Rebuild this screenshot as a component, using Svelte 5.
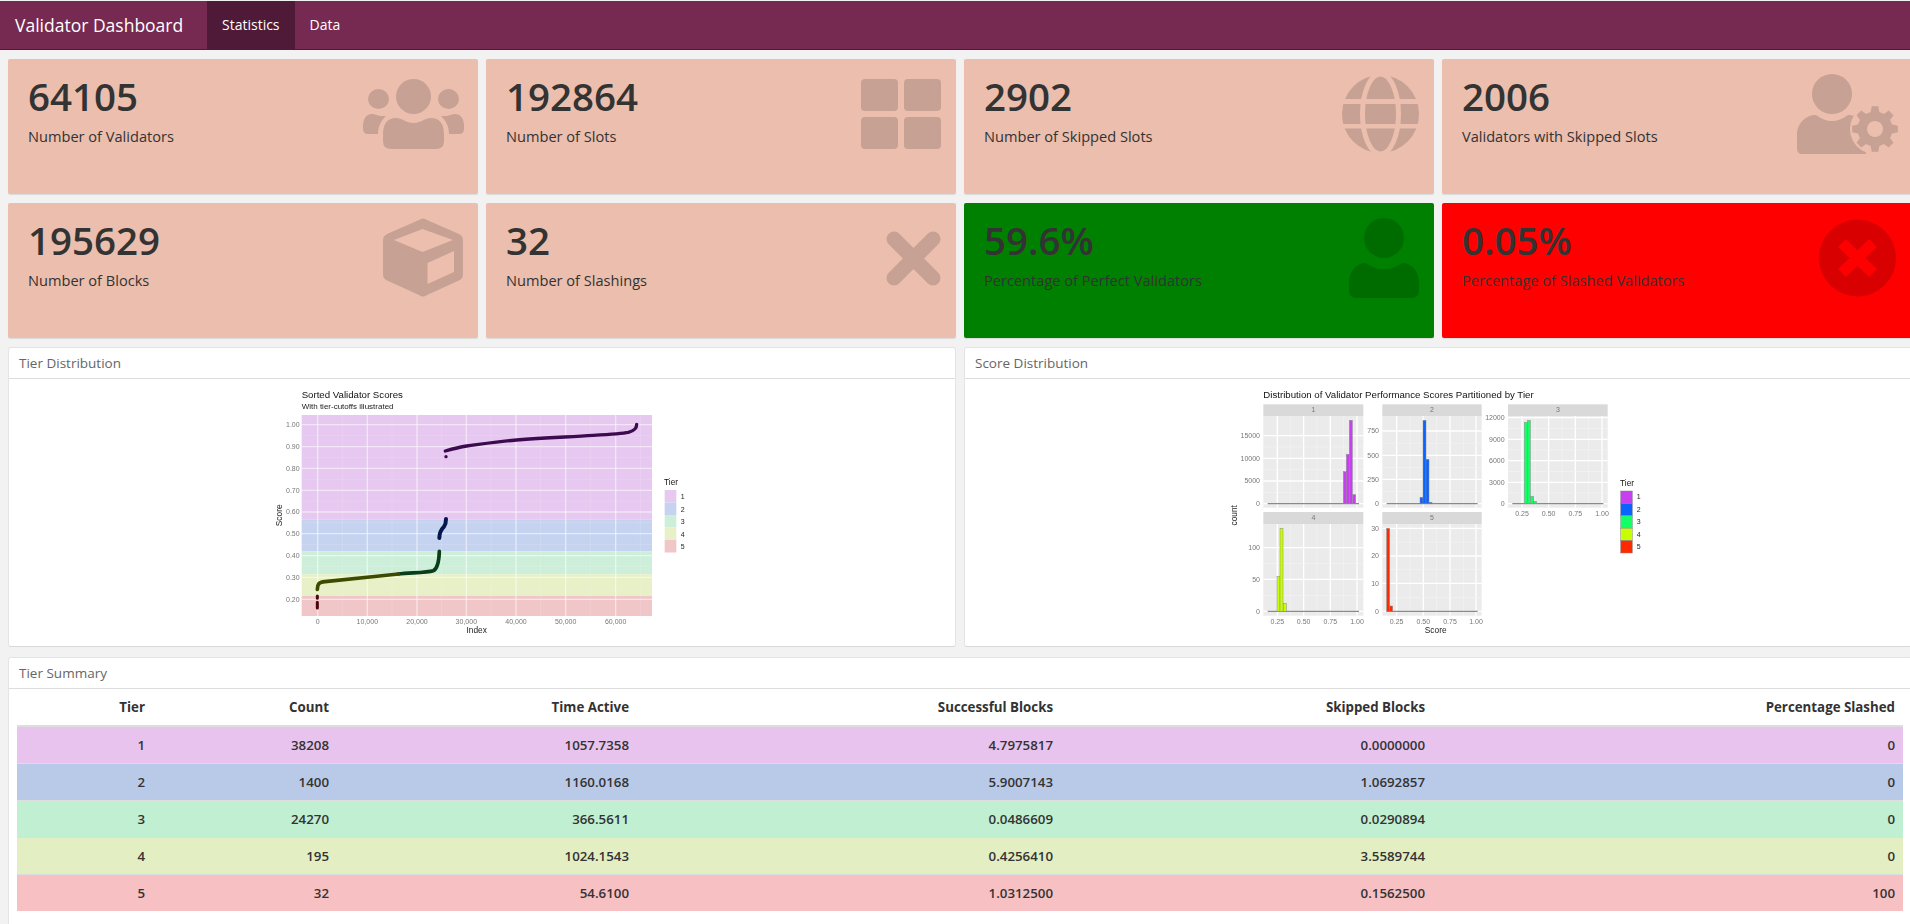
<script>
  const cards = [
    { value: "64105", label: "Number of Validators", icon: "users" },
    { value: "192864", label: "Number of Slots", icon: "th" },
    { value: "2902", label: "Number of Skipped Slots", icon: "globe" },
    { value: "2006", label: "Validators with Skipped Slots", icon: "usercog" },
    { value: "195629", label: "Number of Blocks", icon: "cube" },
    { value: "32", label: "Number of Slashings", icon: "times" },
    { value: "59.6%", label: "Percentage of Perfect Validators", icon: "user", tone: "green" },
    { value: "0.05%", label: "Percentage of Slashed Validators", icon: "timescircle", tone: "red" }
  ];

  const rows = [
    ["1", "38208", "1057.7358", "4.7975817", "0.0000000", "0", "#e8c3ee"],
    ["2", "1400", "1160.0168", "5.9007143", "1.0692857", "0", "#b9cae8"],
    ["3", "24270", "366.5611", "0.0486609", "0.0290894", "0", "#c0efd2"],
    ["4", "195", "1024.1543", "0.4256410", "3.5589744", "0", "#e3eec3"],
    ["5", "32", "54.6100", "1.0312500", "0.1562500", "100", "#f7c0c3"]
  ];
  const columns = ["Tier", "Count", "Time Active", "Successful Blocks", "Skipped Blocks", "Percentage Slashed"];
  const columnWidths = [136, 184, 300, 424, 372, 470];

  // gear outline for the user-cog icon
  function gearPath(cx, cy, rOuter, rInner, teeth) {
    let d = "";
    const step = (Math.PI * 2) / teeth;
    for (let i = 0; i < teeth; i++) {
      const a = i * step - Math.PI / 2;
      const pts = [
        [rInner, a - step * 0.32],
        [rOuter, a - step * 0.18],
        [rOuter, a + step * 0.18],
        [rInner, a + step * 0.32]
      ];
      for (const [r, t] of pts) {
        d += (d ? "L" : "M") + (cx + r * Math.cos(t)).toFixed(1) + " " + (cy + r * Math.sin(t)).toFixed(1);
      }
    }
    return d + "Z";
  }
  const gear = gearPath(83, 56, 23, 17.5, 8);

  // chart 1, all coordinates in a 3x space to match the plot image
  const bands = [
    { y: 105, h: 313, fill: "#e6c8f0" },
    { y: 418, h: 96, fill: "#c5d3f0" },
    { y: 514, h: 69, fill: "#cdefd9" },
    { y: 583, h: 65, fill: "#e7f0c6" },
    { y: 648, h: 60, fill: "#f0c6c8" }
  ];
  const scoreTicks = [
    ["1.00", 134], ["0.90", 200], ["0.80", 265], ["0.70", 331], ["0.60", 396],
    ["0.50", 461], ["0.40", 527], ["0.30", 592], ["0.20", 658]
  ];
  const indexTicks = [
    ["0", 173], ["10,000", 322], ["20,000", 471], ["30,000", 619],
    ["40,000", 768], ["50,000", 917], ["60,000", 1067]
  ];
  const tierLegend = [
    ["1", "#e6c8f0"], ["2", "#c5d3f0"], ["3", "#cdefd9"], ["4", "#e7f0c6"], ["5", "#f0c6c8"]
  ];

  // chart 2 facets
  const facets = [
    {
      name: "1", x: 130, w: 300, strip: 73, top: 108, bottom: 383, base: 371, color: "#c63ff0",
      xTicks: [172, 251, 331, 411], showX: false,
      yTicks: [["0", 371], ["5000", 303], ["10000", 235], ["15000", 167]],
      bars: [[370, 275], [379, 223], [388, 121], [398, 344]], line: [143, 417]
    },
    {
      name: "2", x: 487, w: 298, strip: 73, top: 108, bottom: 383, base: 371, color: "#0a62ff",
      xTicks: [530, 610, 690, 768], showX: false,
      yTicks: [["0", 371], ["250", 298], ["500", 226], ["750", 153]],
      bars: [[600, 352], [609, 121], [618, 238], [627, 367]], line: [500, 773]
    },
    {
      name: "3", x: 864, w: 299, strip: 73, top: 108, bottom: 383, base: 371, color: "#12ff66",
      xTicks: [906, 986, 1066, 1146], showX: true,
      yTicks: [["0", 371], ["3000", 307], ["6000", 242], ["9000", 178], ["12000", 113]],
      bars: [[913, 127], [922, 121], [932, 349], [941, 364]], line: [877, 1150]
    },
    {
      name: "4", x: 130, w: 300, strip: 396, top: 432, bottom: 707, base: 694, color: "#c8ff00",
      xTicks: [172, 251, 331, 411], showX: true,
      yTicks: [["0", 694], ["50", 598], ["100", 503]],
      bars: [[171, 589], [180, 445], [190, 670]], line: [143, 417]
    },
    {
      name: "5", x: 487, w: 298, strip: 396, top: 432, bottom: 707, base: 694, color: "#ff2a00",
      xTicks: [530, 610, 690, 768], showX: true,
      yTicks: [["0", 694], ["10", 610], ["20", 528], ["30", 445]],
      bars: [[500, 445], [509, 678]], line: [500, 773]
    }
  ];
  const xLabels = ["0.25", "0.50", "0.75", "1.00"];
  const fillLegend = [
    ["1", "#c63ff0"], ["2", "#0a62ff"], ["3", "#12ff66"], ["4", "#c8ff00"], ["5", "#ff2a00"]
  ];
</script>

<div class="page">
  <nav class="topbar">
    <span class="brand">Validator Dashboard</span>
    <a class="tab active" href="#statistics">Statistics</a>
    <a class="tab" href="#data">Data</a>
  </nav>

  <main class="content">
    <section class="boxes">
      {#each cards as card}
        <div class="box {card.tone ?? ''}">
          <h3>{card.value}</h3>
          <p>{card.label}</p>
          <svg class="icon" viewBox="0 0 120 100" aria-hidden="true">
            {#if card.icon === "users"}
              <circle cx="55.5" cy="23.5" r="17.5" />
              <ellipse cx="20.5" cy="26" rx="10.5" ry="10" />
              <ellipse cx="90.5" cy="26" rx="10.5" ry="10" />
              <path d="M25 62C25 50 30 45 38 45C44 45 48 50 55.5 50C63 50 67 45 73 45C81 45 86 50 86 62L86 68Q86 76 78 76L33 76Q25 76 25 68Z" />
              <path d="M5 53C5 46 8 41 14 41C17 41 20 43 24 43L28 43C24 47 20 52 20 61L10 61Q5 61 5 56Z" />
              <path d="M106 53C106 46 103 41 97 41C94 41 91 43 87 43L83 43C87 47 91 52 91 61L101 61Q106 61 106 56Z" />
            {:else if card.icon === "th"}
              <rect x="25" y="6" width="37" height="32" rx="4" />
              <rect x="68" y="6" width="37" height="32" rx="4" />
              <rect x="25" y="44" width="37" height="32" rx="4" />
              <rect x="68" y="44" width="37" height="32" rx="4" />
            {:else if card.icon === "globe"}
              <mask id="globe-cut">
                <rect width="120" height="100" fill="#fff" />
                <ellipse cx="66.5" cy="41" rx="18" ry="40" fill="none" stroke="#000" stroke-width="5" />
                <rect x="20" y="26" width="90" height="5" fill="#000" />
                <rect x="20" y="51" width="90" height="4.5" fill="#000" />
              </mask>
              <ellipse cx="66.5" cy="41" rx="38.5" ry="39" mask="url(#globe-cut)" />
            {:else if card.icon === "usercog"}
              <mask id="cog-cut">
                <rect width="120" height="100" fill="#fff" />
                <circle cx="83" cy="56" r="25" fill="#000" />
              </mask>
              <circle cx="40" cy="21" r="20" />
              <path mask="url(#cog-cut)" d="M5 75L5 62C5 50 14 42 24 42C30 46 34 48 40 48C46 48 50 46 56 42C62 42 66 44 70 48L74 81L10 81Q5 81 5 75Z" />
              <path fill-rule="evenodd" d="{gear} M83 48a8 8 0 1 0 .01 0Z" />
            {:else if card.icon === "cube"}
              <path fill-rule="evenodd" d="M61 3Q65 0 69 3L101 17Q105 19 105 23L105 58Q105 61 102 63L69 78Q65 81 61 78L28 63Q25 61 25 58L25 23Q25 19 29 17ZM36 23L64.5 35L95 23L64.5 12ZM69.5 46L69.5 67L96 55L96 34Z" />
            {:else if card.icon === "times"}
              <path d="M58 22L97 61M97 22L58 61" fill="none" stroke="#000" stroke-width="15" stroke-linecap="round" />
            {:else if card.icon === "user"}
              <circle cx="70" cy="21" r="20" />
              <path d="M35 66C35 54 42 46 52 46C58 50 62 52 70 52C78 52 82 50 88 46C98 46 105 54 105 66L105 73Q105 81 97 81L43 81Q35 81 35 73Z" />
            {:else if card.icon === "timescircle"}
              <mask id="circle-cut">
                <rect width="120" height="100" fill="#fff" />
                <path d="M50 26L81 56M81 26L50 56" fill="none" stroke="#000" stroke-width="11" />
              </mask>
              <circle cx="65.5" cy="41" r="38.5" mask="url(#circle-cut)" />
            {/if}
          </svg>
        </div>
      {/each}
    </section>

    <section class="plots">
      <div class="panel">
        <div class="panel-title">Tier Distribution</div>
        <div class="plot-body">
          <svg class="plot" viewBox="0 0 1332 798" role="img" aria-label="Sorted Validator Scores">
            <text x="125" y="53" class="title">Sorted Validator Scores</text>
            <text x="125" y="88" class="subtitle">With tier-cutoffs illustrated</text>

            {#each bands as band}
              <rect x="125" y={band.y} width="1051" height={band.h} fill={band.fill} />
            {/each}
            {#each scoreTicks as tick, i}
              <line x1="125" x2="1176" y1={tick[1]} y2={tick[1]} class="grid-major" />
              {#if i > 0}
                <line x1="125" x2="1176" y1={tick[1] - 33} y2={tick[1] - 33} class="grid-minor" />
              {/if}
              <text x="119" y={tick[1] + 7} text-anchor="end" class="tick">{tick[0]}</text>
            {/each}
            {#each indexTicks as tick}
              <line x1={tick[1]} x2={tick[1]} y1="105" y2="708" class="grid-major" />
              <line x1={tick[1] + 74} x2={tick[1] + 74} y1="105" y2="708" class="grid-minor" />
              <text x={tick[1]} y="731" text-anchor="middle" class="tick">{tick[0]}</text>
            {/each}

            <path class="curve" stroke="#3b0a4f" stroke-width="10" d="M556 213C580 206 600 201 620 198C680 190 720 184 770 180C850 174 920 171 1000 166C1050 163 1090 160 1105 157C1125 152 1130 145 1130 133" />
            <circle cx="558" cy="230" r="5" fill="#3b0a4f" />
            <path class="curve" stroke="#04184f" stroke-width="12" d="M538 474C538 458 542 450 552 440C558 432 558 426 558 417" />
            <path class="curve" stroke="#0a3d1a" stroke-width="11" d="M538 514C537 545 532 566 520 572C500 578 450 578 415 582" />
            <path class="curve" stroke="#3d4a00" stroke-width="11" d="M415 582C340 590 260 598 195 605C175 607 173 612 172 628" />
            <path class="curve" stroke="#4a0508" stroke-width="9" d="M172 648L172 655M172 667L172 684" />

            <text x="650" y="759" text-anchor="middle" class="axis">Index</text>
            <text transform="translate(65 406) rotate(-90)" text-anchor="middle" class="axis">Score</text>

            <text x="1212" y="314" class="legend-title">Tier</text>
            {#each tierLegend as item, i}
              <rect x="1214" y={330 + i * 37.5} width="35" height="37.5" fill={item[1]} />
              <text x="1262" y={357 + i * 37.5} class="legend-label">{item[0]}</text>
            {/each}
          </svg>
        </div>
      </div>

      <div class="panel">
        <div class="panel-title">Score Distribution</div>
        <div class="plot-body">
          <svg class="plot" viewBox="-12 0 1332 798" role="img" aria-label="Distribution of Validator Performance Scores Partitioned by Tier">
            <text x="130" y="53" class="title">Distribution of Validator Performance Scores Partitioned by Tier</text>

            {#each facets as f}
              <rect x={f.x} y={f.strip} width={f.w} height={f.top - f.strip} fill="#d9d9d9" />
              <text x={f.x + f.w / 2} y={f.strip + 23} text-anchor="middle" class="tick">{f.name}</text>
              <rect x={f.x} y={f.top} width={f.w} height={f.bottom - f.top} fill="#ebebeb" />
              {#each f.xTicks as t, i}
                <line x1={t} x2={t} y1={f.top} y2={f.bottom} class="facet-major" />
                {#if i < 3}
                  <line x1={t + 40} x2={t + 40} y1={f.top} y2={f.bottom} class="facet-minor" />
                {/if}
                {#if f.showX}
                  <text x={t} y={f.bottom + 24} text-anchor="middle" class="tick">{xLabels[i]}</text>
                {/if}
              {/each}
              {#each f.yTicks as t, i}
                <line x1={f.x} x2={f.x + f.w} y1={t[1]} y2={t[1]} class="facet-major" />
                {#if i < f.yTicks.length - 1}
                  <line x1={f.x} x2={f.x + f.w} y1={(t[1] + f.yTicks[i + 1][1]) / 2} y2={(t[1] + f.yTicks[i + 1][1]) / 2} class="facet-minor" />
                {/if}
                <text x={f.x - 10} y={t[1] + 7} text-anchor="end" class="tick">{t[0]}</text>
              {/each}
              <line x1={f.line[0]} x2={f.line[1]} y1={f.base} y2={f.base} class="baseline" />
              {#each f.bars as b}
                <rect x={b[0]} y={b[1]} width="9" height={f.base - b[1]} fill={f.color} class="bar" />
              {/each}
            {/each}

            <text x="647" y="760" text-anchor="middle" class="axis">Score</text>
            <text transform="translate(52 406) rotate(-90)" text-anchor="middle" class="axis">count</text>

            <text x="1200" y="318" class="legend-title">Tier</text>
            {#each fillLegend as item, i}
              <rect x="1202" y={333 + i * 37.2} width="35" height="37.2" fill={item[1]} class="bar" />
              <text x="1250" y={358 + i * 37.2} class="legend-label">{item[0]}</text>
            {/each}
          </svg>
        </div>
      </div>
    </section>

    <section class="panel summary">
      <div class="panel-title">Tier Summary</div>
      <div class="table-wrap">
        <table>
          <colgroup>
            {#each columnWidths as w}
              <col style="width: {w}px" />
            {/each}
          </colgroup>
          <thead>
            <tr>
              {#each columns as c}
                <th>{c}</th>
              {/each}
            </tr>
          </thead>
          <tbody>
            {#each rows as row}
              <tr style="background: {row[6]}">
                {#each row.slice(0, 6) as cell}
                  <td>{cell}</td>
                {/each}
              </tr>
            {/each}
          </tbody>
        </table>
      </div>
    </section>
  </main>
</div>

<style>
  :global(body) {
    margin: 0;
    background: #f2f2f2;
    overflow: hidden;
  }

  .page {
    width: 1910px;
    height: 924px;
    overflow: hidden;
    font-family: "Open Sans", "Noto Sans", sans-serif;
    color: #333;
  }

  .topbar {
    display: flex;
    box-sizing: border-box;
    height: 49px;
    margin-top: 1px;
    background: #762a52;
    border-bottom: 1px solid #4f1a38;
  }

  .brand {
    padding: 0 25px 0 15px;
    width: 167px;
    line-height: 48px;
    font-size: 17.5px;
    color: #fff;
    white-space: nowrap;
  }

  .tab {
    display: block;
    padding: 0 15px;
    line-height: 48px;
    font-size: 14px;
    color: #fff;
    text-decoration: none;
  }

  .tab.active {
    background: #4f1a38;
  }

  .content {
    width: 1904px;
    padding: 9px 0 0 8px;
  }

  .boxes {
    display: grid;
    grid-template-columns: repeat(4, 470px);
    grid-auto-rows: 135px;
    gap: 9px 8px;
  }

  .box {
    position: relative;
    box-sizing: border-box;
    padding: 17px 0 0 20px;
    background: #ebbeae;
    border-radius: 2px;
    box-shadow: 0 1px 1px rgba(0, 0, 0, 0.1);
  }

  .box.green {
    background: #008000;
  }

  .box.red {
    background: #ff0000;
  }

  h3 {
    margin: 0;
    font-size: 38.5px;
    line-height: 41px;
    font-weight: 600;
    white-space: nowrap;
  }

  p {
    margin: 9px 0 0;
    font-size: 14.6px;
    line-height: 20px;
  }

  .icon {
    position: absolute;
    top: 14px;
    right: 0;
    width: 120px;
    height: 100px;
    opacity: 0.15;
    fill: #000;
  }

  .plots {
    display: grid;
    grid-template-columns: 948px 948px;
    gap: 8px;
    margin-top: 9px;
  }

  .panel {
    box-sizing: border-box;
    background: #fff;
    border: 1px solid #e4e4e4;
    border-bottom-color: #d8d8d8;
    border-radius: 3px;
  }

  .panel-title {
    height: 30px;
    padding-left: 10px;
    line-height: 31px;
    font-size: 13.5px;
    color: #666;
    border-bottom: 1px solid #ddd;
  }

  .plot-body {
    box-sizing: border-box;
    height: 267px;
    padding-top: 1px;
  }

  .plot {
    display: block;
    width: 444px;
    height: 266px;
    margin: 0 auto;
    filter: blur(0.45px);
    font-family: "Liberation Sans", Arial, sans-serif;
  }

  .title {
    font-size: 29px;
    fill: #111;
  }

  .subtitle {
    font-size: 24px;
    fill: #222;
  }

  .tick {
    font-size: 21px;
    fill: #777;
  }

  .axis {
    font-size: 25px;
    fill: #222;
  }

  .legend-title {
    font-size: 25px;
    fill: #111;
  }

  .legend-label {
    font-size: 21px;
    fill: #222;
  }

  .grid-major {
    stroke: rgba(255, 255, 255, 0.55);
    stroke-width: 4;
  }

  .grid-minor {
    stroke: rgba(255, 255, 255, 0.22);
    stroke-width: 2;
  }

  .facet-major {
    stroke: #fff;
    stroke-width: 4;
  }

  .facet-minor {
    stroke: #f5f5f5;
    stroke-width: 2;
  }

  .baseline {
    stroke: #8a8a8a;
    stroke-width: 4;
  }

  .bar {
    stroke: #8a8a8a;
    stroke-width: 1.5;
  }

  .curve {
    fill: none;
    stroke-linecap: round;
  }

  .summary {
    margin-top: 10px;
    height: 300px;
  }

  .table-wrap {
    padding: 0 8px;
  }

  table {
    width: 1886px;
    table-layout: fixed;
    border-collapse: collapse;
    font-size: 13.3px;
    font-weight: 600;
    color: #333;
  }

  th,
  td {
    padding: 8px;
    line-height: 20px;
    text-align: right;
    white-space: nowrap;
  }

  th {
    border-bottom: 2px solid #ddd;
  }

  td {
    border-top: 1px solid #ddd;
  }

  tbody tr:first-child td {
    border-top: 0;
  }
</style>
